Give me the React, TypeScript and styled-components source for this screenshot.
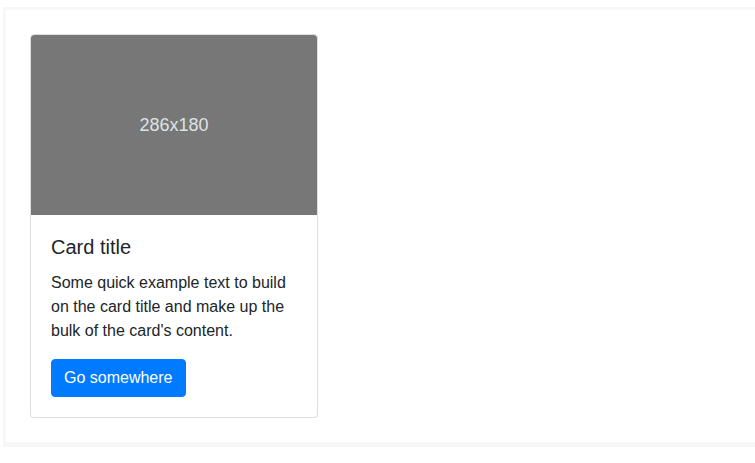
import React from "react";
import styled, { createGlobalStyle } from "styled-components";

const Global = createGlobalStyle`
  html, body { margin: 0; padding: 0; background: #fff; }
  body {
    font-family: "Liberation Sans", Arial, Helvetica, sans-serif;
    font-size: 16px;
    line-height: 1.5;
    color: #212529;
  }
  * { box-sizing: border-box; }
`;

const Example = styled.div`
  margin: 7px 0 0 3px;
  padding: 24px;
  border-style: solid;
  border-color: #f7f7f9;
  border-width: 3px 0 5px 3px;
`;

const Card = styled.div`
  width: 288px;
  display: flex;
  flex-direction: column;
  border: 1px solid rgba(0, 0, 0, 0.125);
  border-radius: 4px;
  background: #fff;
  overflow: hidden;
`;

const Placeholder = styled.div`
  width: 286px;
  height: 180px;
  background: #777;
  color: #dde2e6;
  display: flex;
  align-items: center;
  justify-content: center;
  font-size: 18px;
  border-radius: 3px 3px 0 0;
`;

const Body = styled.div`
  padding: 20px;
`;

const Title = styled.h5`
  margin: 0 0 12px;
  font-size: 20px;
  font-weight: 500;
  line-height: 1.2;
`;

const Text = styled.p`
  margin: 0 0 16px;
`;

const Button = styled.a`
  display: inline-block;
  padding: 6px 12px;
  font-size: 16px;
  line-height: 1.5;
  color: #fff;
  background: #007bff;
  border: 1px solid #007bff;
  border-radius: 4px;
  text-decoration: none;
  cursor: pointer;
`;

export default function App() {
  return (
    <>
      <Global />
      <Example>
        <Card>
          <Placeholder>286x180</Placeholder>
          <Body>
            <Title>Card title</Title>
            <Text>
              Some quick example text to build on the card title and make up
              the bulk of the card's content.
            </Text>
            <Button href="#">Go somewhere</Button>
          </Body>
        </Card>
      </Example>
    </>
  );
}
